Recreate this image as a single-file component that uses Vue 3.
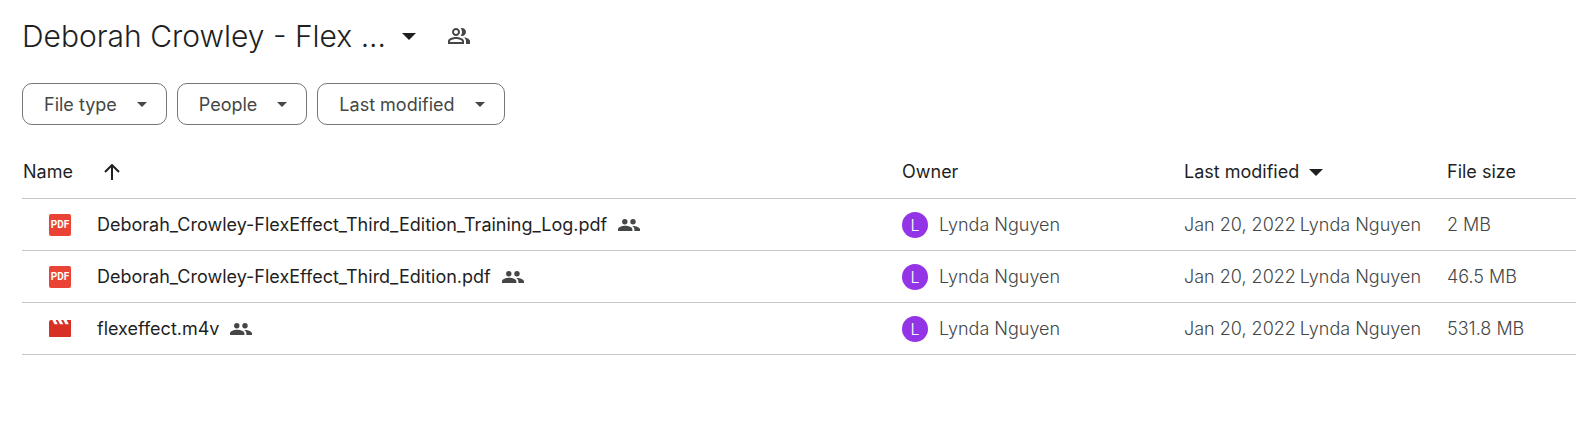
<script setup>
const filters = ['File type', 'People', 'Last modified']
const files = [
  { name: 'Deborah_Crowley-FlexEffect_Third_Edition_Training_Log.pdf', kind: 'pdf', owner: 'Lynda Nguyen', date: 'Jan 20, 2022', size: '2 MB' },
  { name: 'Deborah_Crowley-FlexEffect_Third_Edition.pdf', kind: 'pdf', owner: 'Lynda Nguyen', date: 'Jan 20, 2022', size: '46.5 MB' },
  { name: 'flexeffect.m4v', kind: 'video', owner: 'Lynda Nguyen', date: 'Jan 20, 2022', size: '531.8 MB' },
]
</script>

<template>
  <main class="drive">
    <header class="heading">
      <h1>
        <button class="title" type="button">
          Deborah Crowley - Flex ...
          <svg class="caret-large" viewBox="0 0 14 7" aria-hidden="true"><path d="M0 0h14L7 7z" /></svg>
        </button>
      </h1>
      <button class="share" type="button" aria-label="Manage access">
        <svg viewBox="0 0 24 24" aria-hidden="true">
          <path d="M16.67 13.13C18.04 14.06 19 15.32 19 17v3h4v-3c0-2.18-3.57-3.47-6.33-3.87zM15 12c2.21 0 4-1.79 4-4s-1.79-4-4-4c-.47 0-.91.1-1.33.24C14.5 5.27 15 6.58 15 8s-.5 2.73-1.33 3.76c.42.14.86.24 1.33.24zM9 12c2.21 0 4-1.79 4-4s-1.79-4-4-4-4 1.79-4 4 1.79 4 4 4zm0-6c1.1 0 2 .9 2 2s-.9 2-2 2-2-.9-2-2 .9-2 2-2zM9 13c-2.67 0-8 1.34-8 4v3h16v-3c0-2.66-5.33-4-8-4zm6 5H3v-.99C3.2 16.29 6.3 15 9 15s5.8 1.29 6 2v1z" />
        </svg>
      </button>
    </header>

    <div class="filters">
      <button v-for="label in filters" :key="label" class="chip" type="button">
        {{ label }}
        <svg class="caret-small" viewBox="0 0 10 5" aria-hidden="true"><path d="M0 0h10L5 5z" /></svg>
      </button>
    </div>

    <table class="files">
      <colgroup>
        <col />
        <col class="col-owner" />
        <col class="col-modified" />
        <col class="col-size" />
      </colgroup>
      <thead>
        <tr>
          <th scope="col">
            <button class="sort sort-name" type="button">
              Name
              <svg class="arrow-up" viewBox="0 0 16 16" aria-hidden="true"><path d="M8 16V1.500M1 8l7-7 7 7" /></svg>
            </button>
          </th>
          <th scope="col">Owner</th>
          <th scope="col">
            <button class="sort" type="button">
              Last modified
              <svg class="caret-large" viewBox="0 0 14 7" aria-hidden="true"><path d="M0 0h14L7 7z" /></svg>
            </button>
          </th>
          <th scope="col">File size</th>
        </tr>
      </thead>
      <tbody>
        <tr v-for="file in files" :key="file.name">
          <td>
            <div class="file">
              <span v-if="file.kind === 'pdf'" class="pdf">PDF</span>
              <svg v-else class="video" viewBox="2 4 20 16" preserveAspectRatio="none" aria-hidden="true">
                <path d="M18 4l2 4h-3l-2-4h-2l2 4h-3l-2-4H8l2 4H7L5 4H4c-1.100 0-2 .9-2 2v13c0 .6.4 1 1 1h18c.6 0 1-.4 1-1V4h-4z" />
              </svg>
              <span class="name">{{ file.name }}</span>
              <svg class="people" viewBox="0 0 22 12" aria-label="Shared">
                <circle cx="6.800" cy="2.700" r="2.700" />
                <circle cx="15" cy="2.700" r="2.700" />
                <path d="M0 12v-1.500C0 8 4.200 6.800 7.200 6.800s7.200 1.200 7.200 3.700V12zM14.200 6.900c3.300-.2 7.800 1.100 7.800 3.600V12h-5.600v-1.500c0-1.600-.8-2.700-2.200-3.600z" />
              </svg>
            </div>
          </td>
          <td>
            <div class="owner"><span class="avatar">L</span>{{ file.owner }}</div>
          </td>
          <td>
            <div class="modified"><span>{{ file.date }}</span><span>{{ file.owner }}</span></div>
          </td>
          <td>{{ file.size }}</td>
        </tr>
      </tbody>
    </table>
  </main>
</template>

<style>
body {
  margin: 0;
  background: #fff;
}
</style>

<style scoped>
.drive {
  padding: 12px 0 0 22px;
  font-family: Inter, Roboto, "Liberation Sans", sans-serif;
  font-size: 18px;
  line-height: 24px;
  color: #1f1f1f;
  overflow: hidden;
}

button {
  margin: 0;
  padding: 0;
  border: 0;
  background: none;
  font: inherit;
  color: inherit;
  cursor: pointer;
}

svg {
  display: block;
  flex: none;
  fill: currentColor;
}

.heading {
  display: flex;
  align-items: center;
  gap: 31px;
}

h1 {
  margin: 0;
  font-size: 30px;
  font-weight: 300;
  line-height: 48px;
}

.title {
  display: flex;
  align-items: center;
  gap: 16px;
  white-space: nowrap;
}

.caret-large {
  width: 14px;
  height: 7px;
}

.caret-small {
  width: 10px;
  height: 5px;
}

.share {
  color: #444746;
}

.share svg {
  width: 24px;
  height: 24px;
}

.filters {
  display: flex;
  gap: 10px;
  margin-top: 23px;
}

.chip {
  display: flex;
  align-items: center;
  gap: 20px;
  height: 42px;
  padding: 1px 19px 0 21px;
  border: 1px solid #747775;
  border-radius: 10px;
  color: #444746;
  white-space: nowrap;
}

.files {
  width: 100%;
  margin-top: 21px;
  border-collapse: collapse;
  table-layout: fixed;
}

.col-owner {
  width: 282px;
}

.col-modified {
  width: 263px;
}

.col-size {
  width: 129px;
}

th,
td {
  padding: 0;
  border-bottom: 1px solid #c4c7c5;
  text-align: left;
  white-space: nowrap;
}

th {
  height: 52px;
  font-weight: 400;
}

td {
  height: 51px;
  font-weight: 300;
  color: #444746;
}

.sort {
  display: flex;
  align-items: center;
  gap: 10px;
}

.sort-name {
  padding-left: 1px;
  gap: 31px;
}

.arrow-up {
  width: 16px;
  height: 16px;
  fill: none;
  stroke: currentColor;
  stroke-width: 2;
}

.file {
  display: flex;
  align-items: center;
  padding-left: 27px;
}

.pdf {
  display: flex;
  align-items: center;
  justify-content: center;
  width: 22px;
  height: 22px;
  border-radius: 2px;
  background: #ea4335;
  color: #fff;
  font-family: Roboto, "Liberation Sans", sans-serif;
  font-size: 10px;
  font-weight: 700;
  line-height: 22px;
}

.video {
  width: 22px;
  height: 17px;
  color: #d93025;
}

.name {
  margin: 0 11px 0 26px;
  color: #1f1f1f;
  font-weight: 400;
}

.people {
  width: 22px;
  height: 12px;
}

.owner {
  display: flex;
  align-items: center;
  gap: 11px;
}

.avatar {
  width: 26px;
  border-radius: 50%;
  background: #9334e6;
  color: #fff;
  font-size: 16px;
  line-height: 26px;
  text-align: center;
}

.modified {
  display: flex;
  gap: 4px;
}
</style>
